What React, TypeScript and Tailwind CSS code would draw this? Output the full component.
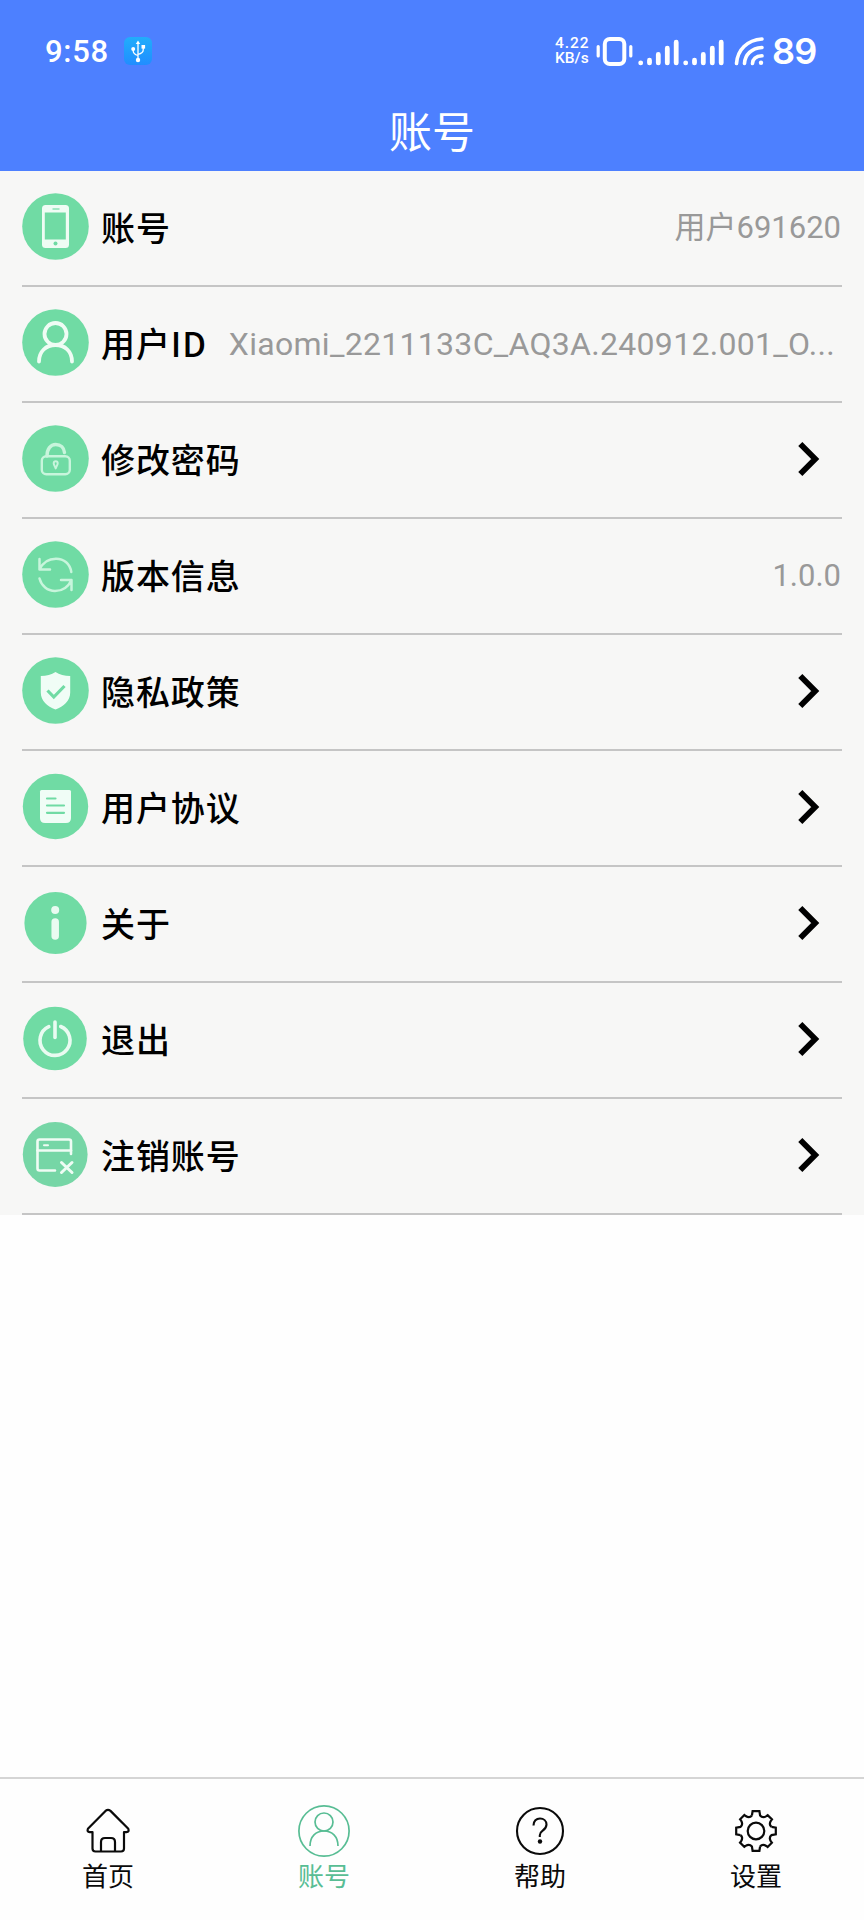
import type { ReactNode } from "react";

const G = "#70dba4";

function Round({ r = 33.3, cx = 33.5, cy = 33.5, fill = G, children }: { r?: number; cx?: number; cy?: number; fill?: string; children: ReactNode }) {
  return (
    <svg width="67" height="67" viewBox="0 0 67 67" fill="none" className="block shrink-0">
      <circle cx={cx} cy={cy} r={r} fill={fill} />
      {children}
    </svg>
  );
}

const PhoneIcon = () => (
  <Round>
    <rect x="20" y="12" width="27" height="43" rx="3.5" fill="#effcf4" />
    <rect x="22.8" y="19.5" width="21" height="27" fill={G} />
    <path d="M30.5 16h7" stroke={G} strokeWidth="1.2" />
    <circle cx="33.5" cy="50.5" r="2" fill={G} />
  </Round>
);
const UserIcon = () => (
  <Round>
    <g stroke="#effcf4" strokeWidth="3.8" strokeLinecap="round">
      <circle cx="33.5" cy="25" r="11" />
      <path d="M17 52.5C17 42.5 24 36 33.5 36S50 42.5 50 52.5" />
    </g>
  </Round>
);
const LockIcon = () => (
  <Round>
    <g stroke="#c8f5dc" strokeLinejoin="round">
      <rect x="19.8" y="31.3" width="28" height="18" rx="4.5" strokeWidth="2.4" />
      <path d="M25 31c0-7 3.500-11.500 8.700-11.500S42 23 42.500 27.500" strokeWidth="3.4" strokeLinecap="round" />
      <path d="M33.700 36.200a2 2 0 0 0-2 2c0 1.500 1.200 3 2 5.200.8-2.200 2-3.700 2-5.200a2 2 0 0 0-2-2z" strokeWidth="2" />
    </g>
  </Round>
);
const SyncIcon = () => (
  <Round>
    <g stroke="#c8f5dc" strokeWidth="2.5" strokeLinecap="round" strokeLinejoin="round">
      <path d="M17.500 18v10.500H28M17.500 28.500C21 21 27 17.700 34 17.700c8 0 14 5 15.300 13.300" />
      <path d="M49.500 49V39H39M49.500 39C46 46.500 40 50 33 50c-7.500 0-13.500-5-15.500-12.500" />
    </g>
  </Round>
);
const ShieldIcon = () => (
  <Round>
    <path d="M33.500 15c4 2.800 9 4 14.700 4v16.500c0 8.500-6.500 13.800-14.700 17-8.200-3.200-14.700-8.500-14.700-17V19c5.700 0 10.700-1.200 14.700-4z" fill="#f0fdf6" />
    <path d="M25.500 33.500l6.300 6.500 10.700-11" stroke={G} strokeWidth="3.2" />
  </Round>
);
const DocIcon = () => (
  <Round r={32.700}>
    <path d="M18 18.500a1.500 1.500 0 0 1 1.500-1.500h28a1.500 1.500 0 0 1 1.500 1.500V45q0 5-5 5H23q-5 0-5-5z" fill="#f0fdf6" />
    <path d="M25 25.500h8.500M25 32.500h17M25 39.800h17" stroke={G} strokeWidth="2.2" strokeLinecap="round" />
  </Round>
);
const InfoIcon = () => (
  <Round r={31.100} cy={34}>
    <circle cx="33.200" cy="21" r="4" fill="#e9fbf1" />
    <path d="M33.200 33v14" stroke="#e9fbf1" strokeWidth="7.500" strokeLinecap="round" />
  </Round>
);
const PowerIcon = () => (
  <Round r={31.800} cx={33} cy={33.500}>
    <g stroke="#e9fbf1" strokeWidth="3.600" strokeLinecap="round">
      <path d="M33 17v15.500" />
      <path d="M26.800 21.700A15 15 0 1 0 38.700 21.500" />
    </g>
  </Round>
);
const CloseAccountIcon = () => (
  <Round r={32.400} cx={33.200} cy={33.500} fill="#76d6a6">
    <g stroke="#effcf4" strokeWidth="2.600" strokeLinecap="round" strokeLinejoin="round">
      <path d="M49 33V20.500a2 2 0 0 0-2-2H17.500a2 2 0 0 0-2 2v27a2 2 0 0 0 2 2h15.500" />
      <path d="M15.500 29.500H49" />
      <path d="M39.500 41.500l10.500 10M50 41.500l-10.500 10" strokeWidth="3" />
      <path d="M22 24.300h4" strokeWidth="2" />
    </g>
  </Round>
);

const Chevron = () => (
  <svg width="24" height="36" viewBox="0 0 24 36" fill="none" className="mr-[20px] block shrink-0">
    <path d="M2.300 3L17.200 18 2.300 33" stroke="#000" strokeWidth="5.800" />
  </svg>
);

const rows: { label: string; icon: ReactNode; value?: string; long?: boolean }[] = [
  { label: "账号", icon: <PhoneIcon />, value: "用户691620" },
  { label: "用户ID", icon: <UserIcon />, value: "Xiaomi_2211133C_AQ3A.240912.001_O...", long: true },
  { label: "修改密码", icon: <LockIcon /> },
  { label: "版本信息", icon: <SyncIcon />, value: "1.0.0" },
  { label: "隐私政策", icon: <ShieldIcon /> },
  { label: "用户协议", icon: <DocIcon /> },
  { label: "关于", icon: <InfoIcon /> },
  { label: "退出", icon: <PowerIcon /> },
  { label: "注销账号", icon: <CloseAccountIcon /> },
];

const Bars = () => (
  <svg width="41" height="28" viewBox="0 0 41 28" className="block">
    <g stroke="#fff" strokeWidth="4.800" strokeLinecap="round">
      <path d="M2.700 23.800v.1M11.500 21.200v2.700M20.300 15.500v8.400M29.300 9.200v14.700M38.200 3.200v20.700" />
    </g>
  </svg>
);

function StatusBar() {
  return (
    <div className="flex h-[92px] items-start text-white">
      <div className="ml-[45px] mt-[34px] w-[64px] whitespace-nowrap font-['Roboto',sans-serif] text-[31px] font-medium leading-[36px] tracking-[0.700px]">9:58</div>
      <div className="ml-[15px] mt-[37px] flex h-[28px] w-[28px] items-center justify-center rounded-[6px] bg-linear-to-b from-[#22adfb] to-[#218dff]">
        <svg width="28" height="28" viewBox="0 0 28 28" fill="none" stroke="#fff" strokeWidth="1.300">
          <path d="M14 6v16M9.200 12v2q0 3 4.800 4.500M19.200 10v3q0 3-5.200 4.500" />
          <path d="M14 3.500l2.200 3.500h-4.400z" fill="#fff" stroke="none" />
          <circle cx="14" cy="23" r="2.200" fill="#fff" stroke="none" />
          <circle cx="9.200" cy="12" r="2" fill="#fff" stroke="none" />
          <rect x="17.500" y="8" width="3.600" height="3.600" fill="#fff" stroke="none" />
        </svg>
      </div>
      <div className="ml-auto mt-[36px] flex w-[36px] flex-col whitespace-nowrap font-['Roboto',sans-serif] text-[15.500px] font-medium leading-[15px]">
        <div className="tracking-[0.900px]">4.22</div>
        <div>KB/s</div>
      </div>
      <svg width="37" height="29" viewBox="0 0 37 29" fill="none" stroke="#fff" className="ml-[5px] mt-[37px] block">
        <rect x="8.800" y="2" width="19.500" height="25" rx="5" strokeWidth="4" />
        <path d="M2.200 9.500v9.500M34.800 9.500v9.500" strokeWidth="3.200" strokeLinecap="round" />
      </svg>
      <div className="ml-[5px] mt-[39px] flex gap-[4px]">
        <Bars />
        <Bars />
      </div>
      <svg width="31" height="31" viewBox="0 0 31 31" fill="none" stroke="#fff" strokeWidth="3.600" strokeLinecap="round" className="ml-[10px] mt-[36px] block">
        <path d="M2.500 27.500C3.500 14 13 4 28 3" />
        <path d="M10.500 27.500C11 18.500 17.500 12.200 28 11.500" />
        <path d="M18.500 27.500C18.800 22.800 22.500 20.200 28 19.800" />
        <circle cx="27" cy="26.800" r="2.200" fill="#fff" stroke="none" />
      </svg>
      <div className="ml-[7px] mr-[47px] mt-[29px] w-[45px] whitespace-nowrap font-['Inter',sans-serif] text-[36px] font-semibold leading-[44px] tracking-[-0.800px]">89</div>
    </div>
  );
}

const HomeIcon = () => (
  <svg width="52" height="52" viewBox="0 0 52 52" fill="none" stroke="#0a0a0a" strokeWidth="2.200" strokeLinejoin="round">
    <path d="M23.500 5.900q2.500-2 5 0L46.300 23.800q1.200 3-1.800 3.300H42v16.400q0 3-3 3H13.500q-3 0-3-3V27.100H7.700q-3-.3-1.800-3.300z" />
    <path d="M19 46.500V37q0-4 4-4h6q4 0 4 4v9.500" />
  </svg>
);
const AccountIcon = () => (
  <svg width="52" height="52" viewBox="0 0 52 52" fill="none" stroke="#58bd94" strokeWidth="1.700">
    <circle cx="26" cy="26" r="25.100" />
    <circle cx="26" cy="17" r="9" />
    <path d="M12 41C12 31.500 18 26 26 26s14 5.500 14 15" />
  </svg>
);
const HelpIcon = () => (
  <svg width="52" height="52" viewBox="0 0 52 52" fill="none" stroke="#0a0a0a" strokeWidth="2.100">
    <circle cx="26" cy="26" r="23" />
    <path d="M19.500 20.500c0-4.500 2.800-7 6.500-7s6.500 2.500 6.500 6c0 3-1.700 4.600-3.800 6.200-2 1.500-2.900 2.400-2.900 4.500v1.700" />
    <circle cx="26" cy="36.500" r="2.200" fill="#0a0a0a" stroke="none" />
  </svg>
);
const GearIcon = () => (
  <svg width="52" height="52" viewBox="0 0 52 52" fill="none" stroke="#0a0a0a" strokeWidth="2.200" strokeLinejoin="miter">
    <circle cx="26" cy="26" r="8.300" />
    {[0, 90, 180, 270].map((a) => (
      <path
        key={a}
        transform={`rotate(${a} 26 26)`}
        d="M21.900 10.500L22.600 6.200H29.400L30.100 10.500Q32.600 13.500 36.400 11.100L37.700 10.100L42 14.400L41 15.700Q38.500 19.500 41.500 21.900"
      />
    ))}
  </svg>
);

const tabs: { label: string; icon: ReactNode; active?: boolean }[] = [
  { label: "首页", icon: <HomeIcon /> },
  { label: "账号", icon: <AccountIcon />, active: true },
  { label: "帮助", icon: <HelpIcon /> },
  { label: "设置", icon: <GearIcon /> },
];

export default function App() {
  return (
    <div className="flex h-[1920px] w-[864px] flex-col overflow-hidden bg-[#fefefe] font-['Noto_Sans_CJK_SC',sans-serif]">
      <header className="h-[171px] shrink-0 bg-[#4d80ff]">
        <StatusBar />
        <h1 className="pt-[6px] text-center text-[43px] font-normal leading-[62px] text-white">账号</h1>
      </header>

      <main className="shrink-0 bg-[#f7f7f6] px-[22px]">
        {rows.map((row) => (
          <div key={row.label} className="flex h-[116px] items-center border-b-2 border-[#c5c5c5] pb-[3px]">
            {row.icon}
            <span className="ml-[12px] shrink-0 whitespace-nowrap text-[34px] font-medium leading-[50px] tracking-[0.900px] text-black">{row.label}</span>
            <div className="ml-auto flex items-center">
              {row.value ? (
                <span
                  className={
                    row.long
                      ? "mr-[7px] mt-[3px] whitespace-nowrap font-['Roboto','Noto_Sans_CJK_SC',sans-serif] text-[32px] leading-[46px] tracking-[0.300px] text-[#999]"
                      : "mr-[1px] mt-[3px] whitespace-nowrap font-['Roboto','Noto_Sans_CJK_SC',sans-serif] text-[31px] leading-[46px] text-[#999]"
                  }
                >
                  {row.value}
                </span>
              ) : (
                <Chevron />
              )}
            </div>
          </div>
        ))}
      </main>

      <nav className="mt-auto grid h-[143px] shrink-0 grid-cols-4 border-t-2 border-[#d5d5d5]">
        {tabs.map((tab) => (
          <div key={tab.label} className="flex flex-col items-center pt-[26px]">
            {tab.icon}
            <span className={tab.active ? "-mt-[1px] text-[26px] leading-[38px] text-[#58bd94]" : "-mt-[1px] text-[26px] leading-[38px] text-[#0a0a0a]"}>{tab.label}</span>
          </div>
        ))}
      </nav>
    </div>
  );
}
